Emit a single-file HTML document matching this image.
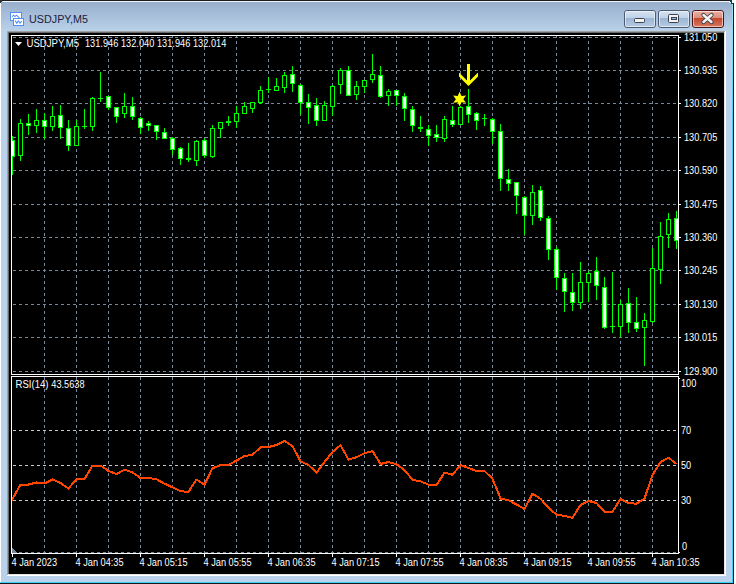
<!DOCTYPE html>
<html><head><meta charset="utf-8"><style>
html,body{margin:0;padding:0;background:#fff;width:736px;height:584px;overflow:hidden}
svg{position:absolute;left:0;top:0;display:block}
text{font-family:"Liberation Sans",sans-serif}
</style></head><body>
<svg width="736" height="584" viewBox="0 0 736 584">
<defs><linearGradient id="tb" x1="0" y1="0" x2="0" y2="1"><stop offset="0" stop-color="#97afcb"/><stop offset="1" stop-color="#bad1ea"/></linearGradient><linearGradient id="btn" x1="0" y1="0" x2="0" y2="1"><stop offset="0" stop-color="#d6e3f1"/><stop offset="0.45" stop-color="#bfd2e8"/><stop offset="0.46" stop-color="#9cb5d2"/><stop offset="1" stop-color="#b6cde6"/></linearGradient><linearGradient id="cls" x1="0" y1="0" x2="0" y2="1"><stop offset="0" stop-color="#eab1a4"/><stop offset="0.45" stop-color="#dc8d7b"/><stop offset="0.46" stop-color="#c4472b"/><stop offset="1" stop-color="#d77c64"/></linearGradient><linearGradient id="cy" gradientUnits="userSpaceOnUse" x1="0" y1="4" x2="0" y2="120"><stop offset="0" stop-color="#a4e2f2"/><stop offset="1" stop-color="#3ed0fa"/></linearGradient><clipPath id="mainclip"><rect x="12" y="36" width="666" height="338"/></clipPath><clipPath id="rsiclip"><rect x="12" y="377" width="666" height="176"/></clipPath></defs>
<g shape-rendering="crispEdges">
<path d="M0 3 Q0 0 3 0 L733 0 L734 1 L734 584 L0 584 Z" fill="#b9d1ea"/>
<rect x="0" y="0" width="731" height="1" fill="#1c1c1c"/>
<rect x="0" y="0" width="2" height="3" fill="#303030"/>
<rect x="3" y="1" width="727" height="1" fill="#f2f6fa"/>
<rect x="0" y="3" width="1" height="580" fill="#ffffff"/>
<rect x="1" y="2" width="731" height="29" fill="url(#tb)"/>
<rect x="732" y="4" width="1" height="579" fill="url(#cy)"/>
<rect x="733" y="3" width="1" height="581" fill="#161616"/>
<rect x="730" y="0" width="2" height="2" fill="#1a3a40"/>
<rect x="731" y="2" width="2" height="2" fill="#0e3a44"/>
<rect x="729" y="2" width="2" height="1" fill="#d8f0f8"/>
<rect x="732" y="0" width="4" height="3" fill="#f4f4f4"/>
<rect x="734" y="0" width="2" height="584" fill="#ffffff"/>
<rect x="0" y="582" width="733" height="1" fill="#3cd0fa"/>
<rect x="0" y="583" width="734" height="1" fill="#161616"/>
<rect x="7" y="31" width="719" height="545" fill="#ffffff"/>
<rect x="7" y="31" width="718" height="544" fill="#a0a0a0"/>
<rect x="8" y="32" width="717" height="543" fill="#e3e3e3"/>
<rect x="8" y="32" width="716" height="542" fill="#696969"/>
<rect x="9" y="33" width="715" height="541" fill="#000000"/>
</g>
<g shape-rendering="crispEdges">
<rect x="10.5" y="12.5" width="11" height="8" fill="#ffffff" stroke="#4f8ff7" stroke-width="1"/>
<rect x="13.5" y="18.5" width="10" height="7" fill="#ffffff" stroke="#4f8ff7" stroke-width="1"/>
</g>
<path d="M12 17 L13.5 15.2 L15 16.6 L16.5 15.2 L18 16.6 L19.5 17.8" stroke="#4f8ff7" fill="none" stroke-width="1.1"/>
<path d="M15.2 20.6 L16.8 23.2 L18.4 21 L20 23.2 L21.8 21" stroke="#4f8ff7" fill="none" stroke-width="1.1"/>
<text transform="translate(29 23) scale(0.955 1)" font-size="11.3" fill="#1b2040">USDJPY,M5</text>
<rect x="624.5" y="10.5" width="31" height="17" rx="2.5" ry="2.5" fill="url(#btn)" stroke="#4d5b72" stroke-width="1"/>
<rect x="625.5" y="11.5" width="29" height="15" rx="1.5" ry="1.5" fill="none" stroke="#ffffff" stroke-opacity="0.55" stroke-width="1"/>
<rect x="658.5" y="10.5" width="31" height="17" rx="2.5" ry="2.5" fill="url(#btn)" stroke="#4d5b72" stroke-width="1"/>
<rect x="659.5" y="11.5" width="29" height="15" rx="1.5" ry="1.5" fill="none" stroke="#ffffff" stroke-opacity="0.55" stroke-width="1"/>
<rect x="692.5" y="10.5" width="31" height="17" rx="2.5" ry="2.5" fill="url(#cls)" stroke="#4a1414" stroke-width="1"/>
<rect x="693.5" y="11.5" width="29" height="15" rx="1.5" ry="1.5" fill="none" stroke="#ffffff" stroke-opacity="0.55" stroke-width="1"/>
<rect x="634.5" y="18.5" width="10" height="4" rx="1" fill="#f2f2f2" stroke="#3b4252" stroke-width="1"/>
<rect x="668.5" y="14.5" width="10" height="8" rx="1" fill="#f2f2f2" stroke="#3b4252" stroke-width="1"/>
<rect x="671.5" y="17.5" width="5" height="2" fill="#9cb6d6" stroke="#3b4252" stroke-width="1"/>
<path d="M703.5 15 L711.5 22 M711.5 15 L703.5 22" stroke="#3a3f4c" stroke-width="4.2" stroke-linecap="round"/>
<path d="M703.5 15 L711.5 22 M711.5 15 L703.5 22" stroke="#f4f4f4" stroke-width="2.4" stroke-linecap="round"/>
<g shape-rendering="crispEdges">
<line x1="13" y1="37.5" x2="678" y2="37.5" stroke="#778899" stroke-width="1" stroke-dasharray="3 3"/>
<line x1="13" y1="70.5" x2="678" y2="70.5" stroke="#778899" stroke-width="1" stroke-dasharray="3 3"/>
<line x1="13" y1="103.5" x2="678" y2="103.5" stroke="#778899" stroke-width="1" stroke-dasharray="3 3"/>
<line x1="13" y1="137.5" x2="678" y2="137.5" stroke="#778899" stroke-width="1" stroke-dasharray="3 3"/>
<line x1="13" y1="170.5" x2="678" y2="170.5" stroke="#778899" stroke-width="1" stroke-dasharray="3 3"/>
<line x1="13" y1="204.5" x2="678" y2="204.5" stroke="#778899" stroke-width="1" stroke-dasharray="3 3"/>
<line x1="13" y1="237.5" x2="678" y2="237.5" stroke="#778899" stroke-width="1" stroke-dasharray="3 3"/>
<line x1="13" y1="270.5" x2="678" y2="270.5" stroke="#778899" stroke-width="1" stroke-dasharray="3 3"/>
<line x1="13" y1="304.5" x2="678" y2="304.5" stroke="#778899" stroke-width="1" stroke-dasharray="3 3"/>
<line x1="13" y1="337.5" x2="678" y2="337.5" stroke="#778899" stroke-width="1" stroke-dasharray="3 3"/>
<line x1="13" y1="371.5" x2="678" y2="371.5" stroke="#778899" stroke-width="1" stroke-dasharray="3 3"/>
<line x1="44.5" y1="35" x2="44.5" y2="374" stroke="#778899" stroke-width="1" stroke-dasharray="3 3"/>
<line x1="44.5" y1="377" x2="44.5" y2="553" stroke="#778899" stroke-width="1" stroke-dasharray="3 3"/>
<line x1="76.5" y1="35" x2="76.5" y2="374" stroke="#778899" stroke-width="1" stroke-dasharray="3 3"/>
<line x1="76.5" y1="377" x2="76.5" y2="553" stroke="#778899" stroke-width="1" stroke-dasharray="3 3"/>
<line x1="108.5" y1="35" x2="108.5" y2="374" stroke="#778899" stroke-width="1" stroke-dasharray="3 3"/>
<line x1="108.5" y1="377" x2="108.5" y2="553" stroke="#778899" stroke-width="1" stroke-dasharray="3 3"/>
<line x1="140.5" y1="35" x2="140.5" y2="374" stroke="#778899" stroke-width="1" stroke-dasharray="3 3"/>
<line x1="140.5" y1="377" x2="140.5" y2="553" stroke="#778899" stroke-width="1" stroke-dasharray="3 3"/>
<line x1="172.5" y1="35" x2="172.5" y2="374" stroke="#778899" stroke-width="1" stroke-dasharray="3 3"/>
<line x1="172.5" y1="377" x2="172.5" y2="553" stroke="#778899" stroke-width="1" stroke-dasharray="3 3"/>
<line x1="204.5" y1="35" x2="204.5" y2="374" stroke="#778899" stroke-width="1" stroke-dasharray="3 3"/>
<line x1="204.5" y1="377" x2="204.5" y2="553" stroke="#778899" stroke-width="1" stroke-dasharray="3 3"/>
<line x1="236.5" y1="35" x2="236.5" y2="374" stroke="#778899" stroke-width="1" stroke-dasharray="3 3"/>
<line x1="236.5" y1="377" x2="236.5" y2="553" stroke="#778899" stroke-width="1" stroke-dasharray="3 3"/>
<line x1="268.5" y1="35" x2="268.5" y2="374" stroke="#778899" stroke-width="1" stroke-dasharray="3 3"/>
<line x1="268.5" y1="377" x2="268.5" y2="553" stroke="#778899" stroke-width="1" stroke-dasharray="3 3"/>
<line x1="300.5" y1="35" x2="300.5" y2="374" stroke="#778899" stroke-width="1" stroke-dasharray="3 3"/>
<line x1="300.5" y1="377" x2="300.5" y2="553" stroke="#778899" stroke-width="1" stroke-dasharray="3 3"/>
<line x1="332.5" y1="35" x2="332.5" y2="374" stroke="#778899" stroke-width="1" stroke-dasharray="3 3"/>
<line x1="332.5" y1="377" x2="332.5" y2="553" stroke="#778899" stroke-width="1" stroke-dasharray="3 3"/>
<line x1="364.5" y1="35" x2="364.5" y2="374" stroke="#778899" stroke-width="1" stroke-dasharray="3 3"/>
<line x1="364.5" y1="377" x2="364.5" y2="553" stroke="#778899" stroke-width="1" stroke-dasharray="3 3"/>
<line x1="396.5" y1="35" x2="396.5" y2="374" stroke="#778899" stroke-width="1" stroke-dasharray="3 3"/>
<line x1="396.5" y1="377" x2="396.5" y2="553" stroke="#778899" stroke-width="1" stroke-dasharray="3 3"/>
<line x1="428.5" y1="35" x2="428.5" y2="374" stroke="#778899" stroke-width="1" stroke-dasharray="3 3"/>
<line x1="428.5" y1="377" x2="428.5" y2="553" stroke="#778899" stroke-width="1" stroke-dasharray="3 3"/>
<line x1="460.5" y1="35" x2="460.5" y2="374" stroke="#778899" stroke-width="1" stroke-dasharray="3 3"/>
<line x1="460.5" y1="377" x2="460.5" y2="553" stroke="#778899" stroke-width="1" stroke-dasharray="3 3"/>
<line x1="492.5" y1="35" x2="492.5" y2="374" stroke="#778899" stroke-width="1" stroke-dasharray="3 3"/>
<line x1="492.5" y1="377" x2="492.5" y2="553" stroke="#778899" stroke-width="1" stroke-dasharray="3 3"/>
<line x1="524.5" y1="35" x2="524.5" y2="374" stroke="#778899" stroke-width="1" stroke-dasharray="3 3"/>
<line x1="524.5" y1="377" x2="524.5" y2="553" stroke="#778899" stroke-width="1" stroke-dasharray="3 3"/>
<line x1="556.5" y1="35" x2="556.5" y2="374" stroke="#778899" stroke-width="1" stroke-dasharray="3 3"/>
<line x1="556.5" y1="377" x2="556.5" y2="553" stroke="#778899" stroke-width="1" stroke-dasharray="3 3"/>
<line x1="588.5" y1="35" x2="588.5" y2="374" stroke="#778899" stroke-width="1" stroke-dasharray="3 3"/>
<line x1="588.5" y1="377" x2="588.5" y2="553" stroke="#778899" stroke-width="1" stroke-dasharray="3 3"/>
<line x1="620.5" y1="35" x2="620.5" y2="374" stroke="#778899" stroke-width="1" stroke-dasharray="3 3"/>
<line x1="620.5" y1="377" x2="620.5" y2="553" stroke="#778899" stroke-width="1" stroke-dasharray="3 3"/>
<line x1="652.5" y1="35" x2="652.5" y2="374" stroke="#778899" stroke-width="1" stroke-dasharray="3 3"/>
<line x1="652.5" y1="377" x2="652.5" y2="553" stroke="#778899" stroke-width="1" stroke-dasharray="3 3"/>
<line x1="19" y1="552.5" x2="678" y2="552.5" stroke="#778899" stroke-width="1" stroke-dasharray="3 3"/>
<path d="M12 548 L12 553 L17 553 Z" fill="#778899"/>
<line x1="13" y1="430.5" x2="678" y2="430.5" stroke="#c8c8c8" stroke-width="1" stroke-dasharray="3 3"/>
<line x1="13" y1="465.5" x2="678" y2="465.5" stroke="#c8c8c8" stroke-width="1" stroke-dasharray="3 3"/>
<line x1="13" y1="500.5" x2="678" y2="500.5" stroke="#c8c8c8" stroke-width="1" stroke-dasharray="3 3"/>
</g>
<g clip-path="url(#mainclip)" shape-rendering="crispEdges">
<rect x="12" y="136" width="1" height="39" fill="#00ff00"/>
<rect x="10" y="140" width="5" height="17" fill="#00ff00"/>
<rect x="11" y="141" width="3" height="15" fill="#ffffff"/>
<rect x="20" y="119" width="1" height="42" fill="#00ff00"/>
<rect x="18" y="123" width="5" height="33" fill="#00ff00"/>
<rect x="19" y="124" width="3" height="31" fill="#000000"/>
<rect x="28" y="114" width="1" height="21" fill="#00ff00"/>
<rect x="26" y="123" width="5" height="3" fill="#00ff00"/>
<rect x="27" y="124" width="3" height="1" fill="#ffffff"/>
<rect x="36" y="109" width="1" height="24" fill="#00ff00"/>
<rect x="34" y="120" width="5" height="6" fill="#00ff00"/>
<rect x="35" y="121" width="3" height="4" fill="#000000"/>
<rect x="44" y="113" width="1" height="26" fill="#00ff00"/>
<rect x="42" y="120" width="5" height="7" fill="#00ff00"/>
<rect x="43" y="121" width="3" height="5" fill="#ffffff"/>
<rect x="52" y="106" width="1" height="25" fill="#00ff00"/>
<rect x="50" y="116" width="5" height="11" fill="#00ff00"/>
<rect x="51" y="117" width="3" height="9" fill="#000000"/>
<rect x="60" y="105" width="1" height="34" fill="#00ff00"/>
<rect x="58" y="115" width="5" height="13" fill="#00ff00"/>
<rect x="59" y="116" width="3" height="11" fill="#ffffff"/>
<rect x="68" y="120" width="1" height="31" fill="#00ff00"/>
<rect x="66" y="128" width="5" height="18" fill="#00ff00"/>
<rect x="67" y="129" width="3" height="16" fill="#ffffff"/>
<rect x="76" y="120" width="1" height="26" fill="#00ff00"/>
<rect x="74" y="126" width="5" height="20" fill="#00ff00"/>
<rect x="75" y="127" width="3" height="18" fill="#000000"/>
<rect x="84" y="109" width="1" height="20" fill="#00ff00"/>
<rect x="82" y="126" width="5" height="1" fill="#00ff00"/>
<rect x="92" y="97" width="1" height="34" fill="#00ff00"/>
<rect x="90" y="98" width="5" height="29" fill="#00ff00"/>
<rect x="91" y="99" width="3" height="27" fill="#000000"/>
<rect x="100" y="72" width="1" height="30" fill="#00ff00"/>
<rect x="98" y="98" width="5" height="1" fill="#00ff00"/>
<rect x="108" y="96" width="1" height="14" fill="#00ff00"/>
<rect x="106" y="96" width="5" height="12" fill="#00ff00"/>
<rect x="107" y="97" width="3" height="10" fill="#ffffff"/>
<rect x="116" y="107" width="1" height="16" fill="#00ff00"/>
<rect x="114" y="107" width="5" height="10" fill="#00ff00"/>
<rect x="115" y="108" width="3" height="8" fill="#ffffff"/>
<rect x="124" y="93" width="1" height="25" fill="#00ff00"/>
<rect x="122" y="106" width="5" height="8" fill="#00ff00"/>
<rect x="123" y="107" width="3" height="6" fill="#000000"/>
<rect x="132" y="97" width="1" height="23" fill="#00ff00"/>
<rect x="130" y="106" width="5" height="11" fill="#00ff00"/>
<rect x="131" y="107" width="3" height="9" fill="#ffffff"/>
<rect x="140" y="117" width="1" height="17" fill="#00ff00"/>
<rect x="138" y="118" width="5" height="10" fill="#00ff00"/>
<rect x="139" y="119" width="3" height="8" fill="#ffffff"/>
<rect x="148" y="121" width="1" height="10" fill="#00ff00"/>
<rect x="146" y="123" width="5" height="3" fill="#00ff00"/>
<rect x="147" y="124" width="3" height="1" fill="#ffffff"/>
<rect x="156" y="125" width="1" height="15" fill="#00ff00"/>
<rect x="154" y="125" width="5" height="7" fill="#00ff00"/>
<rect x="155" y="126" width="3" height="5" fill="#ffffff"/>
<rect x="164" y="128" width="1" height="11" fill="#00ff00"/>
<rect x="162" y="132" width="5" height="7" fill="#00ff00"/>
<rect x="163" y="133" width="3" height="5" fill="#ffffff"/>
<rect x="172" y="137" width="1" height="18" fill="#00ff00"/>
<rect x="170" y="138" width="5" height="12" fill="#00ff00"/>
<rect x="171" y="139" width="3" height="10" fill="#ffffff"/>
<rect x="180" y="147" width="1" height="18" fill="#00ff00"/>
<rect x="178" y="148" width="5" height="11" fill="#00ff00"/>
<rect x="179" y="149" width="3" height="9" fill="#ffffff"/>
<rect x="188" y="143" width="1" height="19" fill="#00ff00"/>
<rect x="186" y="158" width="5" height="2" fill="#00ff00"/>
<rect x="196" y="140" width="1" height="26" fill="#00ff00"/>
<rect x="194" y="141" width="5" height="20" fill="#00ff00"/>
<rect x="195" y="142" width="3" height="18" fill="#000000"/>
<rect x="204" y="138" width="1" height="20" fill="#00ff00"/>
<rect x="202" y="140" width="5" height="16" fill="#00ff00"/>
<rect x="203" y="141" width="3" height="14" fill="#ffffff"/>
<rect x="212" y="125" width="1" height="33" fill="#00ff00"/>
<rect x="210" y="128" width="5" height="29" fill="#00ff00"/>
<rect x="211" y="129" width="3" height="27" fill="#000000"/>
<rect x="220" y="122" width="1" height="16" fill="#00ff00"/>
<rect x="218" y="122" width="5" height="7" fill="#00ff00"/>
<rect x="219" y="123" width="3" height="5" fill="#000000"/>
<rect x="228" y="116" width="1" height="10" fill="#00ff00"/>
<rect x="226" y="121" width="5" height="2" fill="#00ff00"/>
<rect x="236" y="106" width="1" height="22" fill="#00ff00"/>
<rect x="234" y="113" width="5" height="9" fill="#00ff00"/>
<rect x="235" y="114" width="3" height="7" fill="#000000"/>
<rect x="244" y="102" width="1" height="12" fill="#00ff00"/>
<rect x="242" y="106" width="5" height="8" fill="#00ff00"/>
<rect x="243" y="107" width="3" height="6" fill="#000000"/>
<rect x="252" y="102" width="1" height="11" fill="#00ff00"/>
<rect x="250" y="102" width="5" height="7" fill="#00ff00"/>
<rect x="251" y="103" width="3" height="5" fill="#000000"/>
<rect x="260" y="86" width="1" height="18" fill="#00ff00"/>
<rect x="258" y="90" width="5" height="13" fill="#00ff00"/>
<rect x="259" y="91" width="3" height="11" fill="#000000"/>
<rect x="268" y="77" width="1" height="16" fill="#00ff00"/>
<rect x="266" y="89" width="5" height="1" fill="#00ff00"/>
<rect x="276" y="78" width="1" height="13" fill="#00ff00"/>
<rect x="274" y="86" width="5" height="5" fill="#00ff00"/>
<rect x="275" y="87" width="3" height="3" fill="#000000"/>
<rect x="284" y="72" width="1" height="21" fill="#00ff00"/>
<rect x="282" y="75" width="5" height="13" fill="#00ff00"/>
<rect x="283" y="76" width="3" height="11" fill="#000000"/>
<rect x="292" y="66" width="1" height="26" fill="#00ff00"/>
<rect x="290" y="74" width="5" height="10" fill="#00ff00"/>
<rect x="291" y="75" width="3" height="8" fill="#ffffff"/>
<rect x="300" y="84" width="1" height="31" fill="#00ff00"/>
<rect x="298" y="85" width="5" height="18" fill="#00ff00"/>
<rect x="299" y="86" width="3" height="16" fill="#ffffff"/>
<rect x="308" y="94" width="1" height="30" fill="#00ff00"/>
<rect x="306" y="102" width="5" height="6" fill="#00ff00"/>
<rect x="307" y="103" width="3" height="4" fill="#ffffff"/>
<rect x="316" y="98" width="1" height="28" fill="#00ff00"/>
<rect x="314" y="105" width="5" height="16" fill="#00ff00"/>
<rect x="315" y="106" width="3" height="14" fill="#ffffff"/>
<rect x="324" y="101" width="1" height="20" fill="#00ff00"/>
<rect x="322" y="105" width="5" height="16" fill="#00ff00"/>
<rect x="323" y="106" width="3" height="14" fill="#000000"/>
<rect x="332" y="85" width="1" height="31" fill="#00ff00"/>
<rect x="330" y="86" width="5" height="21" fill="#00ff00"/>
<rect x="331" y="87" width="3" height="19" fill="#000000"/>
<rect x="340" y="68" width="1" height="26" fill="#00ff00"/>
<rect x="338" y="70" width="5" height="15" fill="#00ff00"/>
<rect x="339" y="71" width="3" height="13" fill="#000000"/>
<rect x="348" y="66" width="1" height="30" fill="#00ff00"/>
<rect x="346" y="70" width="5" height="26" fill="#00ff00"/>
<rect x="347" y="71" width="3" height="24" fill="#ffffff"/>
<rect x="356" y="81" width="1" height="19" fill="#00ff00"/>
<rect x="354" y="86" width="5" height="9" fill="#00ff00"/>
<rect x="355" y="87" width="3" height="7" fill="#000000"/>
<rect x="364" y="80" width="1" height="13" fill="#00ff00"/>
<rect x="362" y="80" width="5" height="7" fill="#00ff00"/>
<rect x="363" y="81" width="3" height="5" fill="#000000"/>
<rect x="372" y="54" width="1" height="29" fill="#00ff00"/>
<rect x="370" y="74" width="5" height="6" fill="#00ff00"/>
<rect x="371" y="75" width="3" height="4" fill="#000000"/>
<rect x="380" y="66" width="1" height="32" fill="#00ff00"/>
<rect x="378" y="75" width="5" height="22" fill="#00ff00"/>
<rect x="379" y="76" width="3" height="20" fill="#ffffff"/>
<rect x="388" y="89" width="1" height="17" fill="#00ff00"/>
<rect x="386" y="91" width="5" height="5" fill="#00ff00"/>
<rect x="387" y="92" width="3" height="3" fill="#000000"/>
<rect x="396" y="90" width="1" height="16" fill="#00ff00"/>
<rect x="394" y="90" width="5" height="6" fill="#00ff00"/>
<rect x="395" y="91" width="3" height="4" fill="#ffffff"/>
<rect x="404" y="93" width="1" height="28" fill="#00ff00"/>
<rect x="402" y="96" width="5" height="13" fill="#00ff00"/>
<rect x="403" y="97" width="3" height="11" fill="#ffffff"/>
<rect x="412" y="106" width="1" height="26" fill="#00ff00"/>
<rect x="410" y="109" width="5" height="17" fill="#00ff00"/>
<rect x="411" y="110" width="3" height="15" fill="#ffffff"/>
<rect x="420" y="116" width="1" height="16" fill="#00ff00"/>
<rect x="418" y="127" width="5" height="2" fill="#00ff00"/>
<rect x="428" y="125" width="1" height="21" fill="#00ff00"/>
<rect x="426" y="129" width="5" height="7" fill="#00ff00"/>
<rect x="427" y="130" width="3" height="5" fill="#ffffff"/>
<rect x="436" y="125" width="1" height="17" fill="#00ff00"/>
<rect x="434" y="134" width="5" height="4" fill="#00ff00"/>
<rect x="435" y="135" width="3" height="2" fill="#ffffff"/>
<rect x="444" y="116" width="1" height="26" fill="#00ff00"/>
<rect x="442" y="119" width="5" height="20" fill="#00ff00"/>
<rect x="443" y="120" width="3" height="18" fill="#000000"/>
<rect x="452" y="106" width="1" height="21" fill="#00ff00"/>
<rect x="450" y="120" width="5" height="5" fill="#00ff00"/>
<rect x="451" y="121" width="3" height="3" fill="#ffffff"/>
<rect x="460" y="106" width="1" height="19" fill="#00ff00"/>
<rect x="458" y="107" width="5" height="18" fill="#00ff00"/>
<rect x="459" y="108" width="3" height="16" fill="#000000"/>
<rect x="468" y="89" width="1" height="34" fill="#00ff00"/>
<rect x="466" y="106" width="5" height="9" fill="#00ff00"/>
<rect x="467" y="107" width="3" height="7" fill="#ffffff"/>
<rect x="476" y="112" width="1" height="18" fill="#00ff00"/>
<rect x="474" y="113" width="5" height="8" fill="#00ff00"/>
<rect x="475" y="114" width="3" height="6" fill="#ffffff"/>
<rect x="484" y="114" width="1" height="12" fill="#00ff00"/>
<rect x="482" y="118" width="5" height="1" fill="#00ff00"/>
<rect x="492" y="118" width="1" height="26" fill="#00ff00"/>
<rect x="490" y="119" width="5" height="13" fill="#00ff00"/>
<rect x="491" y="120" width="3" height="11" fill="#ffffff"/>
<rect x="500" y="124" width="1" height="67" fill="#00ff00"/>
<rect x="498" y="131" width="5" height="48" fill="#00ff00"/>
<rect x="499" y="132" width="3" height="46" fill="#ffffff"/>
<rect x="508" y="169" width="1" height="22" fill="#00ff00"/>
<rect x="506" y="179" width="5" height="5" fill="#00ff00"/>
<rect x="507" y="180" width="3" height="3" fill="#ffffff"/>
<rect x="516" y="182" width="1" height="32" fill="#00ff00"/>
<rect x="514" y="182" width="5" height="14" fill="#00ff00"/>
<rect x="515" y="183" width="3" height="12" fill="#ffffff"/>
<rect x="524" y="196" width="1" height="39" fill="#00ff00"/>
<rect x="522" y="197" width="5" height="19" fill="#00ff00"/>
<rect x="523" y="198" width="3" height="17" fill="#ffffff"/>
<rect x="532" y="185" width="1" height="40" fill="#00ff00"/>
<rect x="530" y="192" width="5" height="24" fill="#00ff00"/>
<rect x="531" y="193" width="3" height="22" fill="#000000"/>
<rect x="540" y="186" width="1" height="35" fill="#00ff00"/>
<rect x="538" y="190" width="5" height="28" fill="#00ff00"/>
<rect x="539" y="191" width="3" height="26" fill="#ffffff"/>
<rect x="548" y="216" width="1" height="44" fill="#00ff00"/>
<rect x="546" y="218" width="5" height="32" fill="#00ff00"/>
<rect x="547" y="219" width="3" height="30" fill="#ffffff"/>
<rect x="556" y="247" width="1" height="43" fill="#00ff00"/>
<rect x="554" y="249" width="5" height="29" fill="#00ff00"/>
<rect x="555" y="250" width="3" height="27" fill="#ffffff"/>
<rect x="564" y="273" width="1" height="39" fill="#00ff00"/>
<rect x="562" y="278" width="5" height="14" fill="#00ff00"/>
<rect x="563" y="279" width="3" height="12" fill="#ffffff"/>
<rect x="572" y="273" width="1" height="38" fill="#00ff00"/>
<rect x="570" y="292" width="5" height="11" fill="#00ff00"/>
<rect x="571" y="293" width="3" height="9" fill="#ffffff"/>
<rect x="580" y="262" width="1" height="47" fill="#00ff00"/>
<rect x="578" y="282" width="5" height="21" fill="#00ff00"/>
<rect x="579" y="283" width="3" height="19" fill="#000000"/>
<rect x="588" y="271" width="1" height="31" fill="#00ff00"/>
<rect x="586" y="273" width="5" height="10" fill="#00ff00"/>
<rect x="587" y="274" width="3" height="8" fill="#000000"/>
<rect x="596" y="257" width="1" height="43" fill="#00ff00"/>
<rect x="594" y="271" width="5" height="15" fill="#00ff00"/>
<rect x="595" y="272" width="3" height="13" fill="#ffffff"/>
<rect x="604" y="277" width="1" height="52" fill="#00ff00"/>
<rect x="602" y="287" width="5" height="41" fill="#00ff00"/>
<rect x="603" y="288" width="3" height="39" fill="#ffffff"/>
<rect x="612" y="272" width="1" height="61" fill="#00ff00"/>
<rect x="610" y="326" width="5" height="1" fill="#00ff00"/>
<rect x="620" y="300" width="1" height="37" fill="#00ff00"/>
<rect x="618" y="304" width="5" height="23" fill="#00ff00"/>
<rect x="619" y="305" width="3" height="21" fill="#000000"/>
<rect x="628" y="288" width="1" height="45" fill="#00ff00"/>
<rect x="626" y="303" width="5" height="20" fill="#00ff00"/>
<rect x="627" y="304" width="3" height="18" fill="#ffffff"/>
<rect x="636" y="297" width="1" height="35" fill="#00ff00"/>
<rect x="634" y="322" width="5" height="7" fill="#00ff00"/>
<rect x="635" y="323" width="3" height="5" fill="#ffffff"/>
<rect x="644" y="313" width="1" height="53" fill="#00ff00"/>
<rect x="642" y="320" width="5" height="8" fill="#00ff00"/>
<rect x="643" y="321" width="3" height="6" fill="#000000"/>
<rect x="652" y="248" width="1" height="75" fill="#00ff00"/>
<rect x="650" y="268" width="5" height="54" fill="#00ff00"/>
<rect x="651" y="269" width="3" height="52" fill="#000000"/>
<rect x="660" y="222" width="1" height="62" fill="#00ff00"/>
<rect x="658" y="236" width="5" height="34" fill="#00ff00"/>
<rect x="659" y="237" width="3" height="32" fill="#000000"/>
<rect x="668" y="213" width="1" height="35" fill="#00ff00"/>
<rect x="666" y="219" width="5" height="16" fill="#00ff00"/>
<rect x="667" y="220" width="3" height="14" fill="#000000"/>
<rect x="676" y="211" width="1" height="38" fill="#00ff00"/>
<rect x="674" y="218" width="5" height="23" fill="#00ff00"/>
<rect x="675" y="219" width="3" height="21" fill="#ffffff"/>
</g>
<g fill="#ffff00">
<rect x="467" y="64" width="3" height="18"/>
<path d="M459 72.5 L468.5 82 L478 72.5 L478 76.5 L468.5 86 L459 76.5 Z"/>
<polygon points="459.60,91.75 461.45,95.95 466.01,95.45 463.30,99.15 466.01,102.85 461.45,102.35 459.60,106.55 457.75,102.35 453.19,102.85 455.90,99.15 453.19,95.45 457.75,95.95"/>
</g>
<g clip-path="url(#rsiclip)"><path d="M4.5 514.0 L12.5 499.0 L20.5 484.5 L28.5 484.5 L36.5 482.5 L44.5 483.5 L52.5 479.5 L60.5 483.0 L68.5 488.5 L76.5 479.0 L84.5 479.0 L92.5 465.5 L100.5 465.5 L108.5 471.0 L116.5 474.0 L124.5 469.7 L132.5 472.4 L140.5 478.0 L148.5 478.0 L156.5 479.3 L164.5 483.7 L172.5 487.3 L180.5 491.3 L188.5 491.8 L196.5 479.6 L204.5 484.6 L212.5 468.2 L220.5 465.2 L228.5 465.0 L236.5 460.5 L244.5 456.0 L252.5 454.8 L260.5 447.3 L268.5 447.0 L276.5 445.0 L284.5 441.0 L292.5 446.0 L300.5 461.4 L308.5 465.0 L316.5 472.7 L324.5 462.0 L332.5 452.0 L340.5 445.2 L348.5 459.6 L356.5 457.2 L364.5 453.3 L372.5 451.0 L380.5 464.0 L388.5 462.0 L396.5 464.3 L404.5 470.0 L412.5 479.8 L420.5 481.4 L428.5 484.6 L436.5 485.0 L444.5 472.6 L452.5 474.8 L460.5 465.0 L468.5 468.0 L476.5 471.0 L484.5 471.0 L492.5 478.8 L500.5 498.5 L508.5 500.3 L516.5 504.5 L524.5 509.0 L532.5 493.7 L540.5 498.8 L548.5 507.8 L556.5 514.6 L564.5 516.0 L572.5 517.8 L580.5 505.0 L588.5 501.0 L596.5 503.0 L604.5 511.7 L612.5 511.7 L620.5 498.9 L628.5 503.0 L636.5 503.7 L644.5 498.5 L652.5 475.0 L660.5 462.2 L668.5 457.6 L676.5 464.0" fill="none" stroke="#ff4500" stroke-width="2" stroke-linejoin="round" shape-rendering="crispEdges"/></g>
<g shape-rendering="crispEdges" fill="#ffffff">
<rect x="11" y="35" width="668" height="1"/><rect x="11" y="374" width="668" height="1"/>
<rect x="11" y="35" width="1" height="340"/><rect x="678" y="35" width="1" height="340"/>
<rect x="11" y="376" width="668" height="1"/><rect x="11" y="553" width="668" height="1"/>
<rect x="11" y="376" width="1" height="178"/><rect x="678" y="376" width="1" height="178"/>
<rect x="679" y="37" width="2" height="1"/>
<rect x="679" y="70" width="2" height="1"/>
<rect x="679" y="103" width="2" height="1"/>
<rect x="679" y="137" width="2" height="1"/>
<rect x="679" y="170" width="2" height="1"/>
<rect x="679" y="204" width="2" height="1"/>
<rect x="679" y="237" width="2" height="1"/>
<rect x="679" y="270" width="2" height="1"/>
<rect x="679" y="304" width="2" height="1"/>
<rect x="679" y="337" width="2" height="1"/>
<rect x="679" y="371" width="2" height="1"/>
<rect x="679" y="378" width="1" height="1"/>
<rect x="679" y="552" width="1" height="1"/>
<rect x="12" y="554" width="1" height="3"/>
<rect x="76" y="554" width="1" height="3"/>
<rect x="140" y="554" width="1" height="3"/>
<rect x="204" y="554" width="1" height="3"/>
<rect x="268" y="554" width="1" height="3"/>
<rect x="332" y="554" width="1" height="3"/>
<rect x="396" y="554" width="1" height="3"/>
<rect x="460" y="554" width="1" height="3"/>
<rect x="524" y="554" width="1" height="3"/>
<rect x="588" y="554" width="1" height="3"/>
<rect x="652" y="554" width="1" height="3"/>
</g>
<path d="M15 42 L22 42 L18.5 46 Z" fill="#ffffff"/>
<text transform="translate(26.5 47) scale(1.0 1.05)" fill="#ffffff" font-size="9.6" >USDJPY,M5</text>
<text transform="translate(85 47) scale(0.96 1.05)" fill="#ffffff" font-size="9.6" >131.946</text>
<text transform="translate(121 47) scale(0.96 1.05)" fill="#ffffff" font-size="9.6" >132.040</text>
<text transform="translate(157 47) scale(0.96 1.05)" fill="#ffffff" font-size="9.6" >131.946</text>
<text transform="translate(193 47) scale(0.96 1.05)" fill="#ffffff" font-size="9.6" >132.014</text>
<text transform="translate(15.5 388) scale(1.0 1.05)" fill="#ffffff" font-size="9.6" >RSI(14)</text>
<text transform="translate(51.3 388) scale(0.96 1.05)" fill="#ffffff" font-size="9.6" >43.5638</text>
<text transform="translate(684 41) scale(0.96 1.05)" fill="#ffffff" font-size="9.6" >131.050</text>
<text transform="translate(684 74) scale(0.96 1.05)" fill="#ffffff" font-size="9.6" >130.935</text>
<text transform="translate(684 107) scale(0.96 1.05)" fill="#ffffff" font-size="9.6" >130.820</text>
<text transform="translate(684 141) scale(0.96 1.05)" fill="#ffffff" font-size="9.6" >130.705</text>
<text transform="translate(684 174) scale(0.96 1.05)" fill="#ffffff" font-size="9.6" >130.590</text>
<text transform="translate(684 208) scale(0.96 1.05)" fill="#ffffff" font-size="9.6" >130.475</text>
<text transform="translate(684 241) scale(0.96 1.05)" fill="#ffffff" font-size="9.6" >130.360</text>
<text transform="translate(684 274) scale(0.96 1.05)" fill="#ffffff" font-size="9.6" >130.245</text>
<text transform="translate(684 308) scale(0.96 1.05)" fill="#ffffff" font-size="9.6" >130.130</text>
<text transform="translate(684 341) scale(0.96 1.05)" fill="#ffffff" font-size="9.6" >130.015</text>
<text transform="translate(684 375) scale(0.96 1.05)" fill="#ffffff" font-size="9.6" >129.900</text>
<text transform="translate(681 387) scale(0.96 1.05)" fill="#ffffff" font-size="9.6" >100</text>
<text transform="translate(681 434) scale(0.96 1.05)" fill="#ffffff" font-size="9.6" >70</text>
<text transform="translate(681 469) scale(0.96 1.05)" fill="#ffffff" font-size="9.6" >50</text>
<text transform="translate(681 504) scale(0.96 1.05)" fill="#ffffff" font-size="9.6" >30</text>
<text transform="translate(682 550) scale(0.96 1.05)" fill="#ffffff" font-size="9.6" >0</text>
<text transform="translate(11.5 566) scale(0.96 1.05)" fill="#ffffff" font-size="9.6" >4 Jan 2023</text>
<text transform="translate(75.5 566) scale(0.96 1.05)" fill="#ffffff" font-size="9.6" >4 Jan 04:35</text>
<text transform="translate(139.5 566) scale(0.96 1.05)" fill="#ffffff" font-size="9.6" >4 Jan 05:15</text>
<text transform="translate(203.5 566) scale(0.96 1.05)" fill="#ffffff" font-size="9.6" >4 Jan 05:55</text>
<text transform="translate(267.5 566) scale(0.96 1.05)" fill="#ffffff" font-size="9.6" >4 Jan 06:35</text>
<text transform="translate(331.5 566) scale(0.96 1.05)" fill="#ffffff" font-size="9.6" >4 Jan 07:15</text>
<text transform="translate(395.5 566) scale(0.96 1.05)" fill="#ffffff" font-size="9.6" >4 Jan 07:55</text>
<text transform="translate(459.5 566) scale(0.96 1.05)" fill="#ffffff" font-size="9.6" >4 Jan 08:35</text>
<text transform="translate(523.5 566) scale(0.96 1.05)" fill="#ffffff" font-size="9.6" >4 Jan 09:15</text>
<text transform="translate(587.5 566) scale(0.96 1.05)" fill="#ffffff" font-size="9.6" >4 Jan 09:55</text>
<text transform="translate(651.5 566) scale(0.96 1.05)" fill="#ffffff" font-size="9.6" >4 Jan 10:35</text>
</svg>
</body></html>
